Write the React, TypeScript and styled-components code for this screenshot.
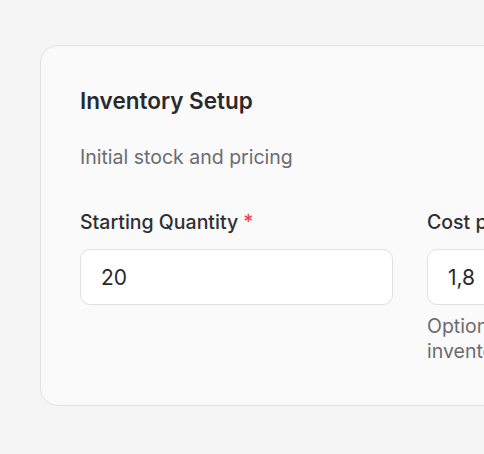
import React from "react";
import styled, { createGlobalStyle } from "styled-components";

const GlobalStyle = createGlobalStyle`
  html, body {
    margin: 0;
    padding: 0;
    background: #f5f5f5;
    font-family: Inter, "Noto Sans", sans-serif;
    overflow: hidden;
  }
  * { box-sizing: border-box; }
`;

const Page = styled.div`
  width: 484px;
  height: 454px;
  padding: 45px 0 0 40px;
  overflow: hidden;
`;

const Card = styled.section`
  width: 740px;
  background: #fafafa;
  border: 1px solid #e2e2e2;
  border-radius: 18px;
  padding: 40px 39px 41px 39px;
`;

const Title = styled.h2`
  margin: 0;
  font-size: 22.5px;
  line-height: 30px;
  font-weight: 600;
  color: #2a2a2d;
`;

const Subtitle = styled.p`
  margin: 27px 0 0;
  font-size: 19.5px;
  line-height: 28px;
  font-weight: 400;
  color: #6b6b72;
`;

const Grid = styled.div`
  display: grid;
  grid-template-columns: 313px 313px;
  column-gap: 34px;
  margin-top: 37px;
`;

const Field = styled.div`
  display: flex;
  flex-direction: column;
`;

const Label = styled.label`
  font-size: 19.5px;
  line-height: 28px;
  font-weight: 500;
  color: #2f2f33;
`;

const Required = styled.span`
  color: #ef4444;
  margin-left: 5px;
`;

const Input = styled.input`
  margin-top: 13px;
  height: 56px;
  width: 100%;
  border: 1px solid #e0e0e0;
  border-radius: 10px;
  background: #ffffff;
  padding: 0 20px;
  font-family: Inter, "Noto Sans", sans-serif;
  font-size: 21px;
  color: #2a2a2d;
  outline: none;
`;

const Help = styled.p`
  margin: 9px 0 0;
  font-size: 19.5px;
  line-height: 25px;
  color: #6b6b72;
`;

export default function App() {
  return (
    <>
      <GlobalStyle />
      <Page>
        <Card>
          <Title>Inventory Setup</Title>
          <Subtitle>Initial stock and pricing</Subtitle>
          <Grid>
            <Field>
              <Label>
                Starting Quantity<Required>*</Required>
              </Label>
              <Input defaultValue="20" />
            </Field>
            <Field>
              <Label>Cost per Unit</Label>
              <Input defaultValue="1,8" />
              <Help>Optional. Used for calculating inventory value.</Help>
            </Field>
          </Grid>
        </Card>
      </Page>
    </>
  );
}
